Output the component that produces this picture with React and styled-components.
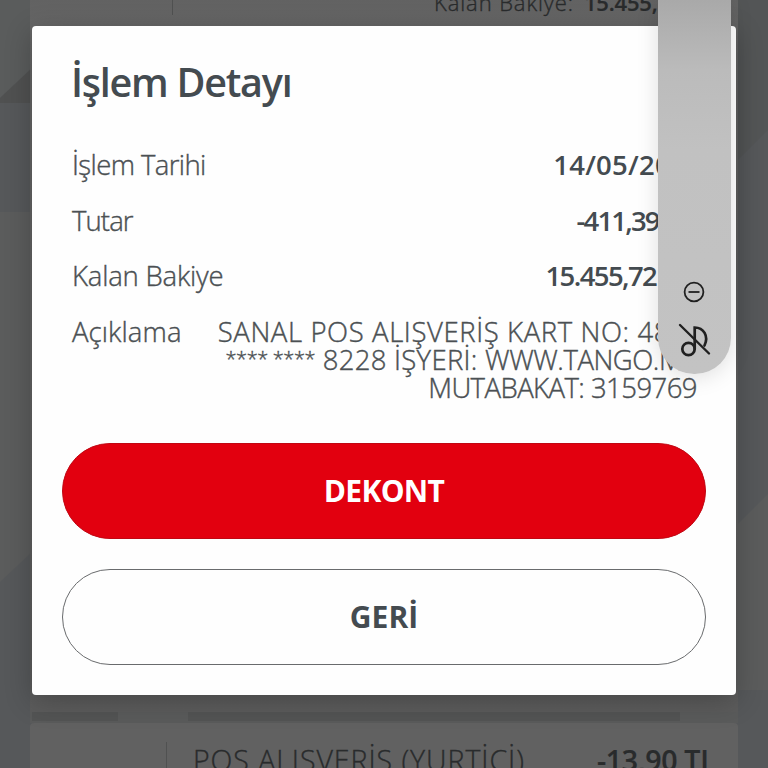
import React from "react";
import styled, { createGlobalStyle } from "styled-components";

const GlobalStyle = createGlobalStyle`
  * { box-sizing: border-box; }
  body { margin: 0; overflow: hidden; font-family: "Open Sans", sans-serif; }
`;

const Screen = styled.div`
  position: relative;
  width: 768px;
  height: 768px;
  overflow: hidden;
  background: #56585a;
`;

const Pattern = styled.svg`
  position: absolute;
  inset: 0;
`;

const Statement = styled.div`
  position: relative;
  height: 768px;
  padding: 0 30px;
  display: flex;
  flex-direction: column;
  justify-content: space-between;
  color: #292b2c;
  font-size: 22px;
  line-height: 30px;
  white-space: nowrap;
`;

const Entry = styled.div`
  display: flex;
  height: ${(p) => p.$height}px;
`;

const TopEntry = styled(Entry)`
  flex: none;
  background: linear-gradient(#626262, #666 26px, #5c5c5c);
`;

const BottomEntry = styled(Entry)`
  font-size: 28.5px;
  line-height: 36px;
  background: #616161;
  border-radius: 4px 4px 0 0;
`;

const Divider = styled.div`
  width: 1px;
  height: ${(p) => p.$height}px;
  margin: ${(p) => p.$top || 0}px ${(p) => p.$right}px 0 ${(p) => p.$left}px;
  background: #505151;
`;

const Gap = styled.div`
  height: 11px;
  display: flex;
  justify-content: space-between;
  padding: 0 58px 0 2px;
  background: #5a5b5b;
`;

const Shade = styled.div`
  width: ${(p) => p.$width}px;
  height: 9px;
  background: #535454;
`;

const Light = styled.span`
  font-weight: 300;
  -webkit-text-stroke: 0.35px currentColor;
  letter-spacing: ${(p) => p.$track || 0}px;
  margin-top: ${(p) => p.$top || 0}px;
`;

const Strong = styled.span`
  font-weight: 600;
  -webkit-text-stroke: 0.2px currentColor;
  letter-spacing: ${(p) => p.$track || 0}px;
  margin-top: ${(p) => p.$top || 0}px;
  margin-left: ${(p) => p.$left}px;
`;

const Modal = styled.section`
  position: absolute;
  left: 32px;
  top: 26px;
  width: 704px;
  height: 669px;
  padding: 32px 30px 30px;
  background: #fefefe;
  border-radius: 4px;
  box-shadow: 0 6px 28px rgba(0, 0, 0, 0.24);
  display: flex;
  flex-direction: column;
  color: #444b50;
`;

const Title = styled.h1`
  margin: 0 0 0 9px;
  font-size: 39.5px;
  line-height: 48px;
  font-weight: 600;
  letter-spacing: -1.25px;
`;

const Details = styled.dl`
  margin: 45px 9px 0 10px;
  font-size: 28px;
  line-height: 28px;
  white-space: nowrap;
`;

const Detail = styled.div`
  display: flex;
  justify-content: space-between;
  margin-bottom: 27.5px;
`;

const Label = styled.dt`
  font-size: 27.5px;
  font-weight: 300;
  -webkit-text-stroke: 0.4px currentColor;
  color: #4b5053;
  letter-spacing: ${(p) => p.$track}px;
`;

const Value = styled.dd`
  margin: 0 ${(p) => p.$right || 0}px 0 0;
  font-size: 27.5px;
  font-weight: 600;
  letter-spacing: ${(p) => p.$track}px;
`;

const Description = styled.dd`
  margin: 0;
  display: flex;
  flex-direction: column;
  align-items: flex-end;
  font-size: 27.5px;
  font-weight: 300;
  -webkit-text-stroke: 0.4px currentColor;
  color: #4b5053;
`;

const Line = styled.span`
  height: 28px;
  margin-right: ${(p) => p.$right || 0}px;
  letter-spacing: ${(p) => p.$track}px;
`;

const Mask = styled.span`
  font-size: 20px;
  line-height: 0;
  vertical-align: 4px;
  letter-spacing: -0.4px;
`;

const Merchant = styled.span`
  letter-spacing: -0.45px;
`;

const Actions = styled.div`
  margin-top: auto;
  display: flex;
  flex-direction: column;
  gap: 30px;
`;

const Button = styled.button`
  height: 96px;
  padding: 0;
  border-radius: 48px;
  border: 1px solid ${(p) => (p.$primary ? "#c00713" : "#696b6d")};
  background: ${(p) => (p.$primary ? "#e2000f" : "#fefefe")};
  color: ${(p) => (p.$primary ? "#fff" : "#444b50")};
  font: 700 30px/36px "Open Sans", sans-serif;
  letter-spacing: ${(p) => p.$track}px;
`;

const Recorder = styled.aside`
  position: absolute;
  left: 658px;
  top: 0;
  width: 73px;
  height: 374px;
  padding: 0 1px 15px 0;
  border-radius: 0 0 36px 36px;
  background: linear-gradient(#a9a9a9, #bbb 70px, #c1c1c1 150px, #c3c3c3);
  box-shadow: 0 3px 22px rgba(0, 0, 0, 0.13);
  display: flex;
  flex-direction: column;
  justify-content: flex-end;
  align-items: center;
  gap: 20px;
`;

export default function App() {
  return (
    <Screen>
      <GlobalStyle />
      <Pattern width="768" height="768">
        <path d="M0 0H32V68L0 98Z" fill="#5a5c5c" />
        <path d="M32 68V103H0V98Z" fill="#505151" />
        <path d="M0 212H32V552L0 582Z" fill="#5b5c5c" />
        <path d="M768 130V0H736V162Z" fill="#535556" />
        <path d="M768 494V690H736V526Z" fill="#5b5c5c" />
      </Pattern>
      <Statement>
        <TopEntry $height={712}>
          <Divider $height={15} $left={142} $right={261} />
          <Light $top={-13} $track={0.9}>Kalan Bakiye:</Light>
          <Strong $top={-13} $left={10} $track={-0.2}>15.455,72 TL</Strong>
        </TopEntry>
        <Gap>
          <Shade $width={86} />
          <Shade $width={492} />
        </Gap>
        <BottomEntry $height={45}>
          <Divider $height={26} $top={19} $left={136} $right={26} />
          <Light $top={19} $track={0.95}>POS ALIŞVERİŞ (YURTİÇİ)</Light>
          <Strong $top={19} $left={72} $track={-0.3}>-13,90 TL</Strong>
        </BottomEntry>
      </Statement>
      <Modal>
        <Title>İşlem Detayı</Title>
        <Details>
          <Detail>
            <Label $track={-0.6}>İşlem Tarihi</Label>
            <Value $right={26} $track={0.25}>14/05/20</Value>
          </Detail>
          <Detail>
            <Label $track={-0.9}>Tutar</Label>
            <Value $right={6} $track={-1.8}>-411,39 TL</Value>
          </Detail>
          <Detail>
            <Label $track={-0.2}>Kalan Bakiye</Label>
            <Value $right={8} $track={-1.6}>15.455,72 TL</Value>
          </Detail>
          <Detail>
            <Label $track={0.1}>Açıklama</Label>
            <Description>
              <Line $right={27} $track={0.6}>SANAL POS ALIŞVERİŞ KART NO: 48</Line>
              <Line $track={0.3}>
                <Mask>**** ****</Mask> 8228 İŞYERİ: <Merchant>WWW.TANGO.ME</Merchant>
              </Line>
              <Line $track={-0.55}>MUTABAKAT: 3159769</Line>
            </Description>
          </Detail>
        </Details>
        <Actions>
          <Button $primary $track={-0.7}>DEKONT</Button>
          <Button $track={0}>GERİ</Button>
        </Actions>
      </Modal>
      <Recorder>
        <svg width="22" height="22" viewBox="0 0 22 22" fill="none" stroke="#202020" strokeWidth="1.8">
          <circle cx="11" cy="11" r="9.4" />
          <path d="M5.5 11H16.5" />
        </svg>
        <svg width="34" height="36" viewBox="0 0 34 36" fill="none" stroke="#202020" strokeWidth="2.7" strokeLinecap="round">
          <circle cx="11.5" cy="26" r="6.2" />
          <path d="M17.7 26V4.5C26.5 4.5 32 13 27.5 22.5" />
          <path d="M3 2L32 30.5" strokeWidth="2.4" />
        </svg>
      </Recorder>
    </Screen>
  );
}
